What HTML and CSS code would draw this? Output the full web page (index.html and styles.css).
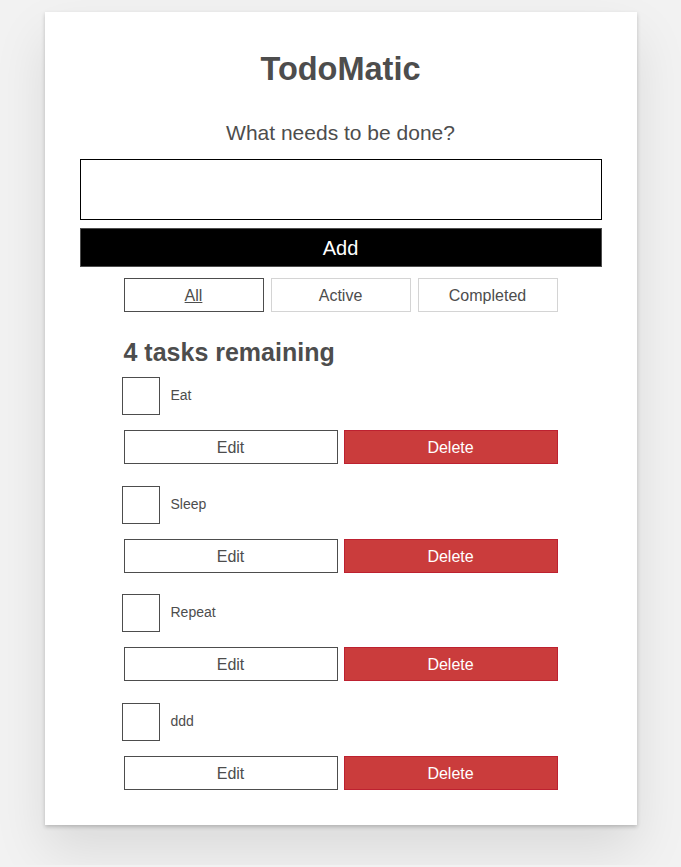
FILE: index.html
```html
<!DOCTYPE html>
<html lang="en">
<head>
<meta charset="utf-8">
<title>TodoMatic</title>
<link rel="stylesheet" href="styles.css">
</head>
<body>
<div class="todoapp">
  <h1 class="title">TodoMatic</h1>
  <form class="new-form">
    <label class="new-label" for="new-todo-input">What needs to be done?</label>
    <input type="text" id="new-todo-input" class="new-input" autocomplete="off">
    <button type="button" class="btn-add">Add</button>
  </form>
  <div class="filters">
    <button type="button" class="filter filter-active"><span class="u">All</span></button>
    <button type="button" class="filter">Active</button>
    <button type="button" class="filter">Completed</button>
  </div>
  <h2 class="list-heading">4 tasks remaining</h2>
  <ul class="todo-list">
    <li class="todo">
      <div class="todo-row">
        <input type="checkbox" class="todo-check" id="todo-0">
        <label class="todo-label" for="todo-0">Eat</label>
      </div>
      <div class="todo-btns">
        <button type="button" class="btn btn-edit">Edit</button>
        <button type="button" class="btn btn-delete">Delete</button>
      </div>
    </li>
    <li class="todo">
      <div class="todo-row">
        <input type="checkbox" class="todo-check" id="todo-1">
        <label class="todo-label" for="todo-1">Sleep</label>
      </div>
      <div class="todo-btns">
        <button type="button" class="btn btn-edit">Edit</button>
        <button type="button" class="btn btn-delete">Delete</button>
      </div>
    </li>
    <li class="todo">
      <div class="todo-row">
        <input type="checkbox" class="todo-check" id="todo-2">
        <label class="todo-label" for="todo-2">Repeat</label>
      </div>
      <div class="todo-btns">
        <button type="button" class="btn btn-edit">Edit</button>
        <button type="button" class="btn btn-delete">Delete</button>
      </div>
    </li>
    <li class="todo">
      <div class="todo-row">
        <input type="checkbox" class="todo-check" id="todo-3">
        <label class="todo-label" for="todo-3">ddd</label>
      </div>
      <div class="todo-btns">
        <button type="button" class="btn btn-edit">Edit</button>
        <button type="button" class="btn btn-delete">Delete</button>
      </div>
    </li>
  </ul>
</div>
</body>
</html>
```

FILE: styles.css
```css
* {
  box-sizing: border-box;
}

html, body {
  margin: 0;
  padding: 0;
}

body {
  background: #f2f2f2;
  color: #4d4d4d;
  font-family: "Liberation Sans", Arial, sans-serif;
  font-size: 16px;
}

.todoapp {
  width: 592px;
  margin: 12px auto 40px;
  padding: 39px 35px 35px;
  background: #fff;
  box-shadow: 0 2px 4px 0 rgba(0, 0, 0, 0.2), 0 25px 50px 0 rgba(0, 0, 0, 0.1);
}

.title {
  margin: 0;
  font-size: 32.5px;
  line-height: 37px;
  font-weight: bold;
  text-align: center;
}

.new-form {
  margin: 0;
  display: flex;
  flex-direction: column;
}

.new-label {
  margin-top: 33px;
  font-size: 21px;
  line-height: 24px;
  text-align: center;
}

.new-input {
  margin-top: 14px;
  width: 100%;
  height: 61px;
  border: 1px solid #000;
  background: #fff;
  padding: 0 8px;
  font: inherit;
  font-size: 20px;
  outline: none;
}

.btn-add {
  margin-top: 8px;
  width: 100%;
  height: 39px;
  background: #000;
  border: 1px solid #4d4d4d;
  color: #fff;
  font-family: inherit;
  font-size: 20px;
  padding: 2px 0 0;
}

.filters {
  margin-top: 11px;
  display: flex;
  justify-content: center;
  gap: 7px;
}

.filter {
  width: 140px;
  height: 34px;
  background: #fff;
  border: 1px solid #d4d4d4;
  color: #4d4d4d;
  font-family: inherit;
  font-size: 16px;
  padding: 2px 0 0;
}

.filter-active {
  border-color: #4d4d4d;
}

.u {
  text-decoration: underline;
}

.list-heading {
  width: 434px;
  margin: 26px auto 0;
  font-size: 25px;
  line-height: 29px;
  font-weight: bold;
}

.todo-list {
  list-style: none;
  width: 434px;
  margin: 10px auto 0;
  padding: 0;
  display: flex;
  flex-direction: column;
  gap: 21.7px;
}

.todo-row {
  display: flex;
  align-items: center;
}

.todo-check {
  appearance: none;
  -webkit-appearance: none;
  margin: 0 0 0 -2px;
  width: 38px;
  height: 38px;
  border: 1px solid #4d4d4d;
  background: #fff;
}

.todo-label {
  margin-left: 11px;
  padding-bottom: 2px;
  font-size: 14px;
  line-height: 16px;
}

.todo-btns {
  margin-top: 15px;
  display: flex;
  gap: 6px;
}

.btn {
  flex: 1;
  height: 34px;
  font-family: inherit;
  font-size: 16px;
  padding: 2px 0 0;
}

.btn-edit {
  background: #fff;
  border: 1px solid #4d4d4d;
  color: #4d4d4d;
}

.btn-delete {
  background: #ca3c3c;
  border: 1px solid #bd2130;
  color: #fff;
}
```
